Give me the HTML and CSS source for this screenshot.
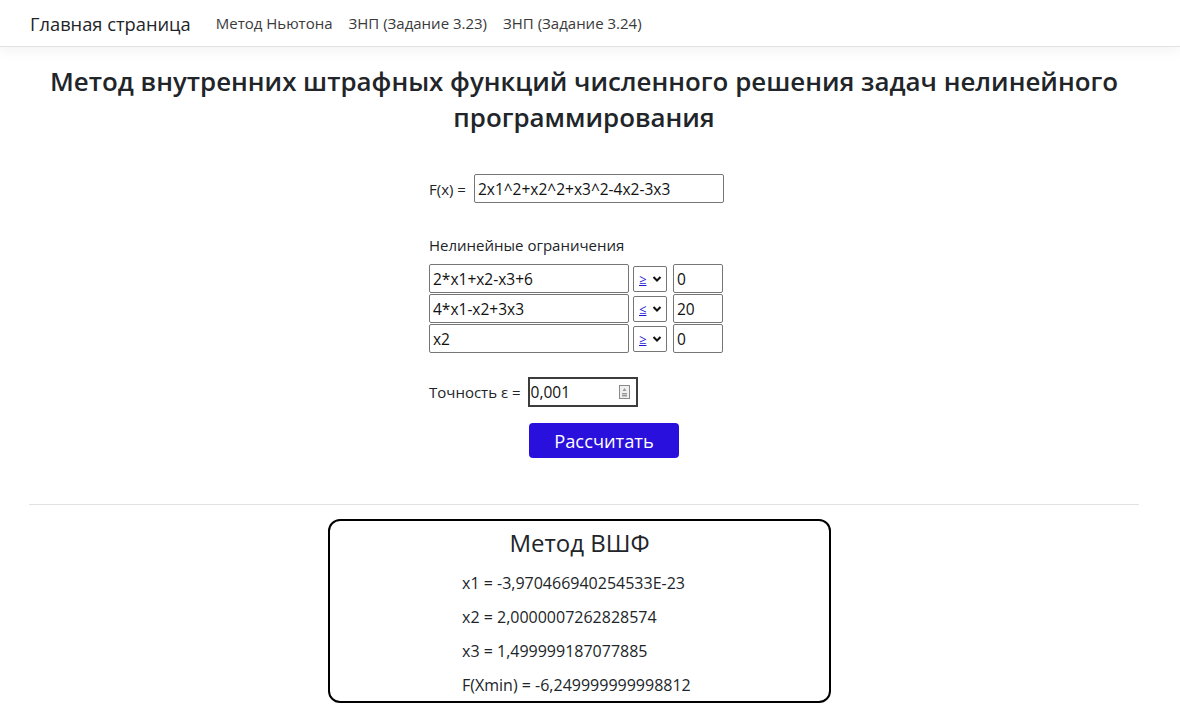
FILE: index.html
```html
<!DOCTYPE html>
<html lang="ru">
<head>
<meta charset="utf-8">
<title>Метод ВШФ</title>
<link rel="stylesheet" href="styles.css">
</head>
<body>
<header class="navbar">
  <a class="brand" href="#">Главная страница</a>
  <nav class="nav-links">
    <a href="#">Метод Ньютона</a>
    <a href="#">ЗНП (Задание 3.23)</a>
    <a href="#">ЗНП (Задание 3.24)</a>
  </nav>
</header>
<main class="container">
  <h1 class="title">Метод внутренних штрафных функций численного решения задач нелинейного программирования</h1>
  <form class="calc">
    <div class="fx-row">
      <label class="lbl">F(x) =</label>
      <input class="inp fx-inp" type="text" value="2x1^2+x2^2+x3^2-4x2-3x3">
    </div>
    <div class="sub-title">Нелинейные ограничения</div>
    <div class="constraints">
      <div class="c-row">
        <input class="inp c-expr" type="text" value="2*x1+x2-x3+6">
        <div class="sel"><span class="sel-val">≥</span><svg class="chev" viewBox="0 0 10 8" width="10" height="8"><path d="M1.5 2 L5 5.5 L8.5 2" fill="none" stroke="#111" stroke-width="2"/></svg></div>
        <input class="inp c-val" type="text" value="0">
      </div>
      <div class="c-row">
        <input class="inp c-expr" type="text" value="4*x1-x2+3x3">
        <div class="sel"><span class="sel-val">≤</span><svg class="chev" viewBox="0 0 10 8" width="10" height="8"><path d="M1.5 2 L5 5.5 L8.5 2" fill="none" stroke="#111" stroke-width="2"/></svg></div>
        <input class="inp c-val" type="text" value="20">
      </div>
      <div class="c-row">
        <input class="inp c-expr" type="text" value="x2">
        <div class="sel"><span class="sel-val">≥</span><svg class="chev" viewBox="0 0 10 8" width="10" height="8"><path d="M1.5 2 L5 5.5 L8.5 2" fill="none" stroke="#111" stroke-width="2"/></svg></div>
        <input class="inp c-val" type="text" value="0">
      </div>
    </div>
    <div class="eps-row">
      <label class="lbl">Точность ε =</label>
      <div class="eps-box">
        <input class="eps-inp" type="text" value="0,001">
        <svg class="spin" viewBox="0 0 11 14" width="11" height="14"><rect x="0.5" y="0.5" width="10" height="13" fill="#f0f0f0" stroke="#8a8a8a"/><path d="M5.5 3 L7.5 6 L3.5 6 Z" fill="#9a9a9a"/><rect x="3" y="8" width="5" height="1.5" fill="#9a9a9a"/><rect x="3" y="10" width="5" height="1.5" fill="#9a9a9a"/></svg>
      </div>
    </div>
    <button class="btn" type="button">Рассчитать</button>
  </form>
  <hr class="sep">
  <section class="result">
    <h2 class="res-title">Метод ВШФ</h2>
    <p class="res-line">x1 = -3,970466940254533E-23</p>
    <p class="res-line">x2 = 2,0000007262828574</p>
    <p class="res-line">x3 = 1,499999187077885</p>
    <p class="res-line">F(Xmin) = -6,249999999998812</p>
  </section>
</main>
</body>
</html>
```
FILE: styles.css
```css
* { box-sizing: border-box; }
html, body { margin: 0; padding: 0; overflow: hidden; }
body {
  font-family: "Open Sans", "Noto Sans", sans-serif;
  color: #212529;
  background: #fff;
  font-size: 15px;
}
.navbar {
  height: 47px;
  display: flex;
  align-items: center;
  padding: 0 30px;
  border-bottom: 1px solid #e2e2e2;
  box-shadow: 0 4px 12px rgba(0,0,0,0.05);
}
.brand {
  font-size: 18.3px;
  color: #212529;
  text-decoration: none;
  margin-right: 25px;
}
.nav-links { display: flex; gap: 16px; }
.nav-links a {
  font-size: 15px;
  color: #3a3a3a;
  text-decoration: none;
}
.container { padding: 0 41px 0 29px; }
.title {
  margin: 16px 0 0;
  text-align: center;
  font-size: 25.9px;
  line-height: 36px;
  font-weight: 600;
}
.calc {
  width: 322px;
  margin: 39px 0 0 400px;
  display: flex;
  flex-direction: column;
  align-items: flex-start;
}
.fx-row { display: flex; align-items: center; height: 29px; }
.lbl { font-size: 15px; margin-right: 7px; }
.fx-row .lbl { margin-right: 8px; }
.inp {
  font-family: inherit;
  font-size: 15.5px;
  color: #111;
  height: 29px;
  border: 1px solid #767676;
  border-radius: 2px;
  padding: 0 3px;
  background: #fff;
}
.fx-inp { width: 250px; }
.sub-title { margin-top: 32px; height: 20px; line-height: 20px; }
.constraints { margin-top: 9px; display: flex; flex-direction: column; gap: 1px; }
.c-row { display: flex; align-items: center; }
.c-expr { width: 200px; }
.sel {
  position: relative;
  width: 34px;
  height: 26px;
  margin: 0 6px 0 4px;
  border: 1px solid #767676;
  border-radius: 2px;
  display: flex;
  align-items: center;
  padding-left: 5px;
  font-size: 13px;
  color: #1a1ad0;
}
.sel-val { text-decoration: underline; text-decoration-thickness: 1px; }
.chev { position: absolute; right: 4px; top: 8px; }
.c-val { width: 50px; }
.eps-row { display: flex; align-items: center; margin-top: 24px; }
.eps-box {
  position: relative;
  width: 110px;
  height: 30px;
  border: 2px solid #3c3c3c;
  display: flex;
  align-items: center;
}
.eps-inp {
  border: none;
  outline: none;
  width: 80px;
  font-family: inherit;
  font-size: 15.5px;
  padding: 0 1px;
  color: #111;
}
.spin { position: absolute; right: 6px; top: 6px; }
.btn {
  margin: 16px 0 0 100px;
  width: 150px;
  height: 35px;
  border: none;
  border-radius: 4px;
  background: #2a10dc;
  color: #fff;
  font-family: inherit;
  font-size: 18.3px;
  font-weight: 500;
}
.sep {
  margin: 46px 0 0;
  border: none;
  border-top: 1px solid #e1e1e1;
}
.result {
  width: 503px;
  margin: 14px 0 0 299px;
  height: 184px;
  border: 2px solid #000;
  border-radius: 12px;
  padding: 5px 0 0 132px;
}
.res-title {
  margin: 0 0 6px -132px;
  text-align: center;
  font-size: 24px;
  font-weight: 400;
  line-height: 34px;
}
.res-line {
  margin: 0;
  font-size: 16px;
  line-height: 34px;
}
```
